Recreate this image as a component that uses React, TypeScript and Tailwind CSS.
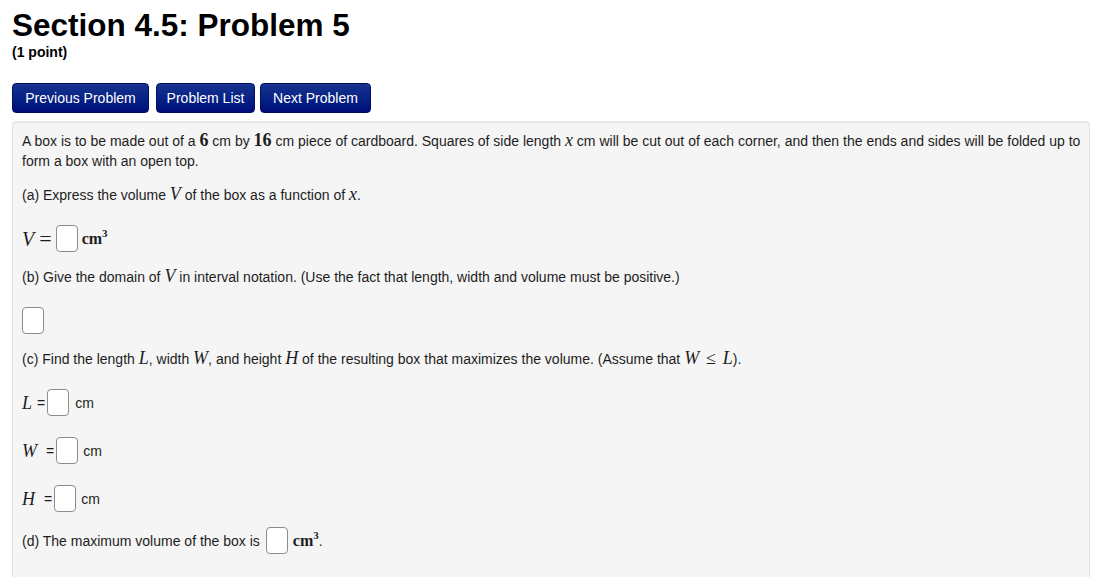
import React from 'react';

const serif = "font-['Liberation_Serif',serif]";

const Blank: React.FC<{ className?: string }> = ({ className = '' }) => (
  <span
    className={`inline-block w-[22px] h-[27px] bg-white border border-[#8c8c8c] rounded-[4px] align-middle ${className}`}
  />
);

const M: React.FC<{ children: React.ReactNode; bold?: boolean }> = ({ children, bold }) => (
  <span className={`${serif} text-[18px] leading-[14px] ${bold ? 'font-bold' : 'italic'}`}>{children}</span>
);

const Cm3: React.FC = () => (
  <span className={`${serif} text-[16px] leading-[14px] font-semibold`}>
    cm<sup className="text-[11px] -top-[7px]">3</sup>
  </span>
);

const NavButton: React.FC<{ label: string; className?: string }> = ({ label, className = '' }) => (
  <button
    className={`h-[30px] border border-[#001060] rounded-[4px] bg-gradient-to-b from-[#17338f] to-[#000b7c] text-white text-[14px] ${className}`}
  >
    {label}
  </button>
);

export default function App() {
  return (
    <div className="min-h-[577px] bg-white px-[12px] font-['Liberation_Sans',Arial,sans-serif] text-[#1d1d1d]">
      <h1 className="pt-[8px] text-[31.5px] leading-[34px] font-bold text-black">Section 4.5: Problem 5</h1>
      <div className="text-[14px] leading-[20px] font-bold text-black">(1 point)</div>

      <div className="mt-[21px] flex">
        <NavButton label="Previous Problem" className="w-[137px]" />
        <NavButton label="Problem List" className="w-[99px] ml-[7px]" />
        <NavButton label="Next Problem" className="w-[111px] ml-[5px]" />
      </div>

      <div className="mt-[8px] w-[1078px] min-h-[460px] bg-[#f5f5f5] border border-[#e3e3e3] rounded-[4px] pt-[9px] pl-[9px] pr-[9px] text-[14px] leading-[20px] shadow-[inset_0_1px_1px_rgba(0,0,0,0.05)]">
        <p className="whitespace-nowrap">
          A box is to be made out of a <M bold>6</M> cm by <M bold>16</M> cm piece of cardboard. Squares of side length{' '}
          <M>x</M> cm will be cut out of each corner, and then the ends and sides will be folded up to
          <br />
          form a box with an open top.
        </p>

        <p className="mt-[14px]">
          (a) Express the volume <M>V</M> of the box as a function of <M>x</M>.
        </p>

        <div className="mt-[20px] h-[27px] flex items-center">
          <span className={`${serif} italic text-[20px]`}>V</span>
          <span className={`${serif} text-[22px] ml-[5px]`}>=</span>
          <Blank className="ml-[4px]" />
          <span className="ml-[4px]">
            <Cm3 />
          </span>
        </div>

        <p className="mt-[15px]">
          (b) Give the domain of <M>V</M> in interval notation. (Use the fact that length, width and volume must be
          positive.)
        </p>

        <div className="mt-[20px] h-[27px] flex items-center">
          <Blank />
        </div>

        <p className="mt-[15px]">
          (c) Find the length <M>L</M>, width <M>W</M>, and height <M>H</M> of the resulting box that maximizes the
          volume. (Assume that <M>W</M>{' '}
          <span className={`${serif} text-[18px] leading-[14px] mx-[3px]`}>≤</span> <M>L</M>).
        </p>

        <div className="mt-[20px] h-[27px] flex items-center">
          <span className={`${serif} italic text-[18px] w-[11px]`}>L</span>
          <span className="ml-[4px]">=</span>
          <Blank className="ml-[2px]" />
          <span className="ml-[6px]">cm</span>
        </div>

        <div className="mt-[21px] h-[27px] flex items-center">
          <span className={`${serif} italic text-[18px] w-[18px]`}>W</span>
          <span className="ml-[6px]">=</span>
          <Blank className="ml-[2px]" />
          <span className="ml-[5px]">cm</span>
        </div>

        <div className="mt-[21px] h-[27px] flex items-center">
          <span className={`${serif} italic text-[18px] w-[15px]`}>H</span>
          <span className="ml-[7px]">=</span>
          <Blank className="ml-[2px]" />
          <span className="ml-[5px]">cm</span>
        </div>

        <div className="mt-[15px] h-[27px] flex items-center">
          <span>(d) The maximum volume of the box is</span>
          <Blank className="ml-[6px]" />
          <span className="ml-[5px]">
            <Cm3 />
          </span>
          <span>.</span>
        </div>
      </div>
    </div>
  );
}
